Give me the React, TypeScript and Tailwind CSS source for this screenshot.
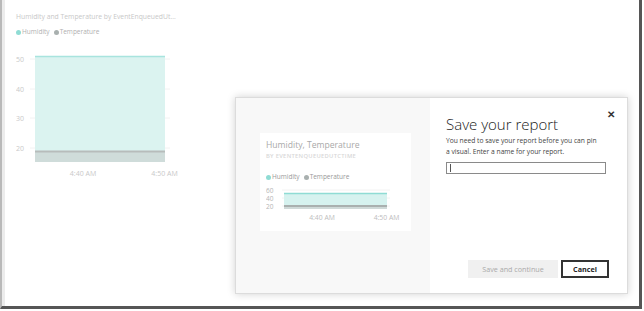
const FONT = "font-['Open_Sans',_'Liberation_Sans',_sans-serif]";

function BackgroundChart() {
  // plot coordinates are relative to the chart's left edge (x=16 on the page)
  const grid = [14, 44, 73, 103];
  const labels = ['50', '40', '30', '20'];
  return (
    <svg width="170" height="135" className="mt-[8px] block">
      {grid.map((y, i) => (
        <g key={y}>
          <line x1="14" x2="154" y1={y} y2={y} stroke="#f2f2f2" strokeWidth="1" />
          <text x="0" y={y + 3} fontSize="7" fill="#c9c9c9" fontFamily="Open Sans, sans-serif">
            {labels[i]}
          </text>
        </g>
      ))}
      <rect x="19" y="11" width="130" height="95" fill="#dbf3f0" />
      <line x1="19" x2="149" y1="11.5" y2="11.5" stroke="#a8e4de" strokeWidth="1.5" />
      <rect x="19" y="106" width="130" height="11" fill="#cfdcda" />
      <line x1="19" x2="149" y1="106.5" y2="106.5" stroke="#b7bcbb" strokeWidth="2" />
      <text x="67" y="131" fontSize="7" fill="#c9c9c9" textAnchor="middle" fontFamily="Open Sans, sans-serif">
        4:40 AM
      </text>
      <text x="148.5" y="131" fontSize="7" fill="#c9c9c9" textAnchor="middle" fontFamily="Open Sans, sans-serif">
        4:50 AM
      </text>
    </svg>
  );
}

function MiniChart() {
  const grid = [6, 14, 22];
  const labels = ['60', '40', '20'];
  return (
    <svg width="140" height="38" className="mt-[2px] block">
      {grid.map((y, i) => (
        <g key={y}>
          <line x1="16" x2="124" y1={y} y2={y} stroke="#f2f2f2" strokeWidth="1" />
          <text x="0" y={y + 2.5} fontSize="6.5" fill="#b5b5b5" fontFamily="Open Sans, sans-serif">
            {labels[i]}
          </text>
        </g>
      ))}
      <rect x="18" y="9" width="103" height="12" fill="#d6f2ef" />
      <line x1="18" x2="121" y1="9.5" y2="9.5" stroke="#8fdcd4" strokeWidth="1.5" />
      <rect x="18" y="21" width="103" height="4" fill="#cfd9d8" />
      <line x1="18" x2="121" y1="22" y2="22" stroke="#a9b0af" strokeWidth="2" />
      <text x="56" y="36" fontSize="6.8" fill="#bdbdbd" textAnchor="middle" fontFamily="Open Sans, sans-serif">
        4:40 AM
      </text>
      <text x="120.5" y="36" fontSize="6.8" fill="#bdbdbd" textAnchor="middle" fontFamily="Open Sans, sans-serif">
        4:50 AM
      </text>
    </svg>
  );
}

function Legend({ color }: { color: string }) {
  return (
    <div className={`flex items-center text-[6.5px] ${color}`}>
      <span className="mr-[1px] h-[5px] w-[5px] rounded-full bg-[#8fdcd4]" />
      <span>Humidity</span>
      <span className="ml-[4px] mr-[1px] h-[5px] w-[5px] rounded-full bg-[#a9b0af]" />
      <span>Temperature</span>
    </div>
  );
}

export default function App() {
  return (
    <div className={`relative h-[311px] w-[644px] overflow-hidden bg-white ${FONT}`}>
      <div className="flex h-[309px] w-[642px] border-b-[3px] border-l-2 border-r-[3px] border-b-[#565656] border-l-[#b9b9b9] border-r-[#565656]">
        <div className="w-[3px] bg-[#ececec]" />
        <div className="flex-1 pl-[11px] pt-[12px]">
          <p className="text-[6.8px] leading-[10px] text-[#c8c8c8]">
            Humidity and Temperature by EventEnqueuedUt...
          </p>
          <div className="mt-[5px] leading-[10px]">
            <Legend color="text-[#b0b0b0]" />
          </div>
          <BackgroundChart />
        </div>
      </div>

      {/* modal */}
      <div className="absolute left-[235px] top-[97px] flex h-[197px] w-[393px] border border-[#dcdcdc] shadow-[0_0_8px_rgba(0,0,0,0.18)]">
        <div className="w-[194px] bg-[#f8f8f8] pl-[24px] pt-[35px]">
          <div className="h-[98px] w-[151px] bg-white pl-[6px] pt-[6px]">
            <p className="text-[8.6px] leading-[13px] text-[#a9a9a9]">Humidity, Temperature</p>
            <p className="text-[5.8px] font-semibold leading-[9px] tracking-[0.3px] text-[#d8d8d8]">
              BY EVENTENQUEUEDUTCTIME
            </p>
            <div className="mt-[11px] leading-[10px]">
              <Legend color="text-[#999]" />
            </div>
            <MiniChart />
          </div>
        </div>

        <div className="relative flex flex-1 flex-col bg-white pl-[16px] pr-[18px] pt-[17px] pb-[15px]">
          <button className="absolute right-[12px] top-[9px] text-[10px] font-bold leading-[14px] text-[#333]">
            ✕
          </button>
          <h1 className="text-[15px] font-light leading-[19px] text-[#222]">Save your report</h1>
          <p className="mt-[1px] text-[6.7px] leading-[11px] text-[#444]">
            You need to save your report before you can pin
            <br />a visual. Enter a name for your report.
          </p>
          <div className="mt-[5px] flex h-[12px] w-[160px] items-center border border-[#8a8a8a] pl-[3px]">
            <span className="h-[8px] w-[1px] bg-[#555]" />
          </div>
          <div className="mt-auto flex justify-end gap-[3px]">
            <button className="h-[18px] w-[90px] bg-[#f0f0f0] text-[7.2px] text-[#aaa]">
              Save and continue
            </button>
            <button className="h-[18px] w-[48px] border-2 border-[#333] text-[7.2px] font-bold text-[#222]">
              Cancel
            </button>
          </div>
        </div>
      </div>
    </div>
  );
}
